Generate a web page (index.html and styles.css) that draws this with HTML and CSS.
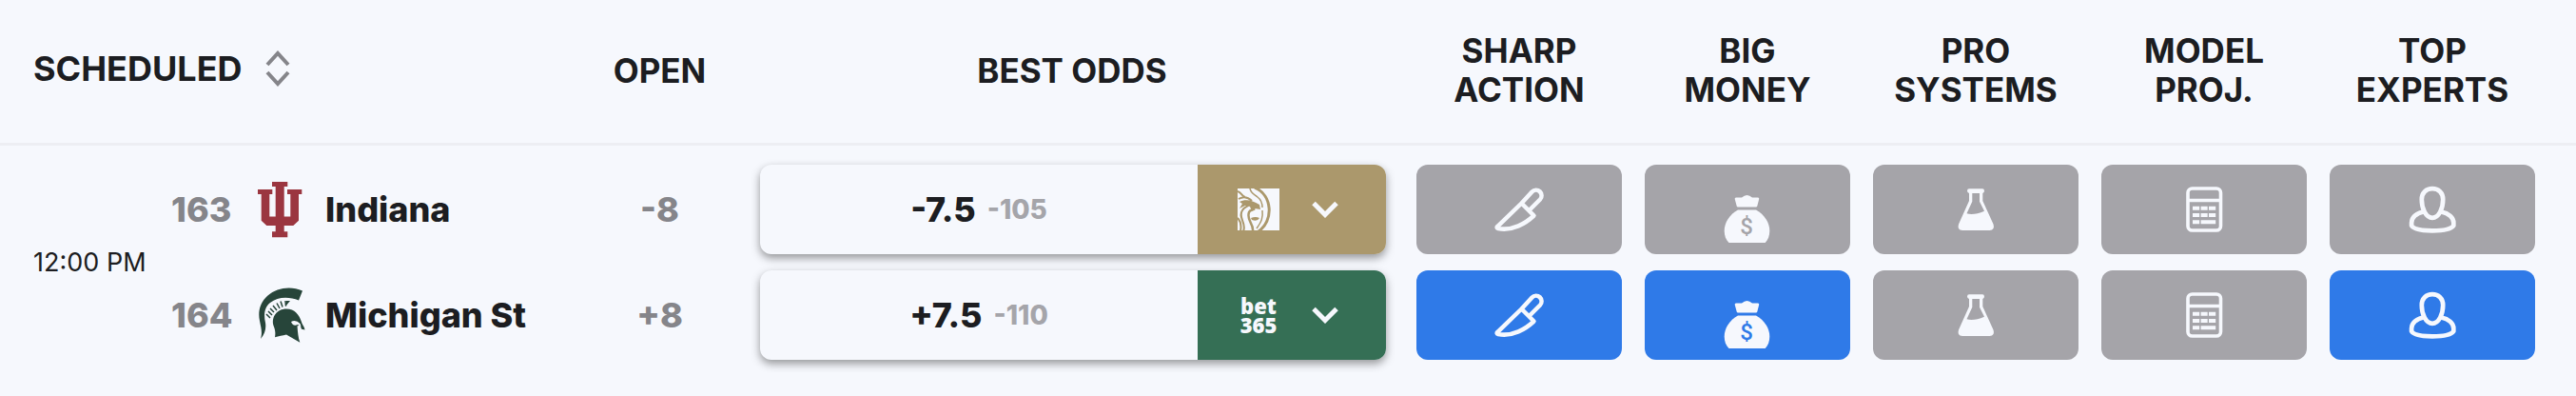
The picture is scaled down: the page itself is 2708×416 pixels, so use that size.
FILE: index.html
```html
<!DOCTYPE html>
<html lang="en">
<head>
  <meta charset="UTF-8">
  <meta name="viewport" content="width=device-width, initial-scale=1.0">
  <title>Best Odds</title>
  <link rel="stylesheet" href="styles.css">
</head>
<body>
  <!-- Shared icons -->
  <svg class="icon-defs" width="0" height="0" aria-hidden="true">
    <symbol id="icon-knife" viewBox="0 0 64 64">
      <path d="M34.5 25.5L45.5 13.5A5.6 5.6 0 0 1 54 21.5L43 32.5M34.5 25.5L47.5 38.5C39 46.5 25 55 10 52Q7.5 51.3 9.3 49.8Z" fill="none" stroke="currentColor" stroke-width="4.5" stroke-linejoin="round" stroke-linecap="round"/>
    </symbol>
    <symbol id="icon-money" viewBox="0 0 64 70">
      <path d="M20 19.5H26Q31.5 14.5 37 19.5H43Q44.5 19.5 44.2 21L42.3 28.5Q42 29.5 41 29.5H22Q21 29.5 20.7 28.5L18.7 21Q18.5 19.5 20 19.5Z" fill="currentColor"/>
      <path d="M22 32.5H41C50 37.5 55.3 46 55.3 54.5C55.3 60 53.5 64 50.7 67H12.5C9.5 64 7.7 60 7.7 54.5C7.7 46 13 37.5 22 32.5Z" fill="currentColor"/>
    </symbol>
    <symbol id="icon-flask" viewBox="0 0 64 64">
      <path fill-rule="evenodd" d="M25 10.3H39Q41 10.3 41 12.6Q41 14.5 39.3 15V23L50.5 47.5Q52.5 54 46.5 54H18Q12 54 14 47.5L25 23V15Q23 14.5 23 12.6Q23 10.3 25 10.3ZM28.3 15V23.7L22.5 36.3Q30 38.5 41 33.7L36 23.7V15Z" fill="currentColor"/>
    </symbol>
    <symbol id="icon-calc" viewBox="0 0 64 64">
      <rect x="15" y="10" width="34.5" height="44" rx="4.5" fill="none" stroke="currentColor" stroke-width="3.6"/>
      <path d="M15 22.5H49.5" stroke="currentColor" stroke-width="3.4"/>
      <path d="M20 30.7H27.2M28.6 30.7H35.7M37 30.7H44.2M20 38H27.2M28.6 38H35.7M37 38H44.2M20 45.2H27.2M28.6 45.2H44.2" stroke="currentColor" stroke-width="4"/>
    </symbol>
    <symbol id="icon-expert" viewBox="0 0 64 64">
      <path d="M32 10.2C38.5 10.2 43.2 14.5 43.2 21.5C43.2 31 39 40.8 32 40.8C25 40.8 20.8 31 20.8 21.5C20.8 14.5 25.5 10.2 32 10.2ZM22.5 34.5C15 36 10.1 40.5 10.1 46V49C12 52.5 21 54.3 32 54.3C43 54.3 52 52.5 54.3 49V46C54.3 40.5 49 36 41.5 34.5" fill="none" stroke="currentColor" stroke-width="4.7" stroke-linejoin="round"/>
    </symbol>
    <symbol id="icon-chevron" viewBox="0 0 28 18">
      <path d="M2 2.5L14 14.5L26 2.5" fill="none" stroke="currentColor" stroke-width="5"/>
    </symbol>
  </svg>

  <table class="odds-table">
    <colgroup>
      <col class="col-time">
      <col>
      <col class="col-open">
      <col class="col-odds">
      <col class="col-flag">
      <col class="col-flag">
      <col class="col-flag">
      <col class="col-flag">
      <col class="col-last">
    </colgroup>
    <thead>
      <tr>
        <th class="scheduled" colspan="2">
          <button class="sort" type="button">
            SCHEDULED
            <svg class="sort-icon" width="26" height="38" viewBox="0 0 26 38" aria-hidden="true">
              <path d="M2 15L13 3L24 15M2 23L13 35L24 23" fill="none" stroke="currentColor" stroke-width="4"/>
            </svg>
          </button>
        </th>
        <th>OPEN</th>
        <th>BEST ODDS</th>
        <th>SHARP<br>ACTION</th>
        <th>BIG<br>MONEY</th>
        <th>PRO<br>SYSTEMS</th>
        <th>MODEL<br>PROJ.</th>
        <th class="last">TOP<br>EXPERTS</th>
      </tr>
    </thead>
    <tbody>
      <!-- Away team -->
      <tr class="away">
        <td class="time" rowspan="2">12:00 PM</td>
        <td>
          <div class="team">
            <span class="rotation">163</span>
            <svg class="team-logo" width="52" height="60" viewBox="0 0 52 60" role="img" aria-label="Indiana logo">
              <path fill="#9b3640" d="M16 1H32.3V6H28.7V37.5H35.3V14H32V9H47.3V14H44V41.7L38.3 47H28.7V53.3H32.3V59.3H16V53.3H19.7V47H10.3L4.7 41.7V14H1V9H16.3V14H13.3V37.5H19.7V6H16Z"/>
            </svg>
            <span class="team-name">Indiana</span>
          </div>
        </td>
        <td class="open">-8</td>
        <td>
          <div class="best-odds">
            <div class="line"><span class="spread">-7.5</span><span class="price">-105</span></div>
            <button class="book betmgm" type="button" aria-label="BetMGM">
              <svg class="book-logo" width="44" height="44" viewBox="0 0 44 44" aria-hidden="true">
                <path fill="currentColor" d="M0 0H44V44H0Z"/>
                <g fill="none" stroke="#ab986c">
                  <path d="M18 -1C37 7 38 34 22 45" stroke-width="3"/>
                  <path d="M13 -1C13 5 18 6 21 9C25 12 26 16 26 20" stroke-width="1.5"/>
                  <path d="M0 3C5 5 4 8 8 9M1 11C6 8 11 9 15 13" stroke-width="2"/>
                  <path d="M6 45C10 36 0 31 5 23C7 19 10 20 12 17M0 31C4 35 4 40 3 45" stroke-width="2"/>
                  <path d="M16 45C17 36 9 34 12 25C13 22 16 23 18 21" stroke-width="2.5"/>
                  <path d="M26 23C27 31 25 35 20 42" stroke-width="1.5"/>
                </g>
                <path fill="#ab986c" d="M2 14C8 11 15 12 23 17L24 22L18 21L15 24L13 19L8 18L2 21L5 16ZM14 31Q19 29 23 31Q21 35 15 33Z"/>
              </svg>
              <svg class="chevron" width="28" height="18"><use href="#icon-chevron"/></svg>
            </button>
          </div>
        </td>
        <td><button class="flag" type="button" aria-label="Sharp action"><svg width="64" height="64"><use href="#icon-knife"/></svg></button></td>
        <td><button class="flag" type="button" aria-label="Big money"><svg class="bag" width="64" height="70"><use href="#icon-money"/><text class="money-sign" x="31" y="58" text-anchor="middle">$</text></svg></button></td>
        <td><button class="flag" type="button" aria-label="Pro systems"><svg width="64" height="64"><use href="#icon-flask"/></svg></button></td>
        <td><button class="flag" type="button" aria-label="Model projections"><svg width="64" height="64"><use href="#icon-calc"/></svg></button></td>
        <td class="last"><button class="flag" type="button" aria-label="Top experts"><svg width="64" height="64"><use href="#icon-expert"/></svg></button></td>
      </tr>
      <!-- Home team -->
      <tr class="home">
        <td>
          <div class="team">
            <span class="rotation">164</span>
            <svg class="team-logo" width="52" height="60" viewBox="0 0 52 60" role="img" aria-label="Michigan State logo">
              <g fill="#27453a">
                <path d="M48 4.5C36 -1 21 1 11.5 9.5C3 17 1 27 3 36C4.5 44 6 48 4 55C8.5 50 10 44 9 38C7 29 8 22 14 17C22 10.5 34 10.5 44 14.5Z"/>
                <path d="M19 53.3C20 48 19 45 17.5 41C15 32 21 23.5 31 23.5C40 23.5 44.5 30 46.5 36C47.5 40 50 42 50.5 45.5L47 44.8L45.5 40.5L42.5 41.5C43 48 43.5 54 45.3 58.7L31 50.5C27 51.5 23 52 19 53.3Z"/>
              </g>
              <path fill="#f6f8fd" d="M36 37Q41 34.5 45.5 39L46.5 42L43 40Q39 42 37 39Z"/>
              <path d="M14 33L10 29M16 30L12 26M18 27L14 23M21 25L17 20M24 23L21 17.5M27 21.5L25 15.5M30.5 20.5L30 15" fill="none" stroke="#27453a" stroke-width="1.5"/>
              <path fill="#27453a" d="M31 15L35 15L30 21Z"/>
            </svg>
            <span class="team-name">Michigan St</span>
          </div>
        </td>
        <td class="open">+8</td>
        <td>
          <div class="best-odds">
            <div class="line"><span class="spread">+7.5</span><span class="price">-110</span></div>
            <button class="book bet365" type="button">
              <span class="book-logo">bet<br>365</span>
              <svg class="chevron" width="28" height="18"><use href="#icon-chevron"/></svg>
            </button>
          </div>
        </td>
        <td><button class="flag active" type="button" aria-label="Sharp action"><svg width="64" height="64"><use href="#icon-knife"/></svg></button></td>
        <td><button class="flag active" type="button" aria-label="Big money"><svg class="bag" width="64" height="70"><use href="#icon-money"/><text class="money-sign" x="31" y="58" text-anchor="middle">$</text></svg></button></td>
        <td><button class="flag" type="button" aria-label="Pro systems"><svg width="64" height="64"><use href="#icon-flask"/></svg></button></td>
        <td><button class="flag" type="button" aria-label="Model projections"><svg width="64" height="64"><use href="#icon-calc"/></svg></button></td>
        <td class="last"><button class="flag active" type="button" aria-label="Top experts"><svg width="64" height="64"><use href="#icon-expert"/></svg></button></td>
      </tr>
    </tbody>
  </table>
</body>
</html>
```
FILE: styles.css
```css
* {
  box-sizing: border-box;
}
body {
  margin: 0;
  background-color: #f6f8fd;
  color: #1c1d21;
  font-family: Inter, "Liberation Sans", sans-serif;
}
button {
  border: 0;
  padding: 0;
  font: inherit;
  color: inherit;
  background: none;
  cursor: pointer;
}
.icon-defs {
  position: absolute;
}

/* Table */
.odds-table {
  width: 100%;
  table-layout: fixed;
  border-collapse: separate;
  border-spacing: 0;
}
.col-time {
  width: 180px;
}
.col-open {
  width: 167px;
}
.col-odds {
  width: 700px;
}
.col-flag {
  width: 240px;
}
.col-last {
  width: 271px;
}
th {
  height: 153px;
  padding: 0 12px 2px;
  border-bottom: 3px solid #edeef3;
  font-size: 35px;
  font-weight: 700;
  line-height: 41px;
  text-align: center;
}
td {
  padding: 0 12px;
}
.away td {
  padding-top: 20px;
}
.home td {
  padding-top: 17px;
  padding-bottom: 38px;
}
th.last, td.last {
  padding-right: 43px;
}
th.scheduled {
  padding: 0 0 6px 35px;
  text-align: left;
}
.sort {
  display: flex;
  align-items: center;
  gap: 24px;
  font-size: 36px;
}
.sort-icon {
  color: #85858a;
}

/* Teams */
.away .time {
  padding: 20px 0 38px 35px;
  font-size: 27px;
  white-space: nowrap;
}
td:has(.team) {
  padding-left: 0;
}
.team {
  display: flex;
  align-items: center;
  height: 94px;
  font-size: 36px;
  font-weight: 800;
}
.rotation {
  width: 68px;
  color: #85858a;
}
.team-logo {
  margin: 0 20px 0 22px;
}
.open {
  font-size: 36px;
  font-weight: 800;
  text-align: center;
  color: #85858a;
}

/* Best odds */
td:has(.best-odds) {
  padding-left: 22px;
  padding-right: 20px;
}
.best-odds {
  display: flex;
  height: 94px;
  border-radius: 12px;
  box-shadow: 0 4px 10px rgba(0, 0, 0, 0.4);
  background-color: #f6f8fd;
}
.line {
  flex: 1;
  display: flex;
  align-items: center;
  justify-content: center;
  gap: 12px;
}
.spread {
  font-size: 36px;
  font-weight: 800;
}
.price {
  font-size: 28px;
  font-weight: 800;
  color: #a5a5aa;
}
.book {
  display: flex;
  align-items: center;
  gap: 34px;
  width: 198px;
  padding-left: 42px;
  border-radius: 0 12px 12px 0;
  color: #f6f8fd;
}
.book-logo {
  width: 44px;
}
.betmgm {
  background-color: #ab986c;
}
.bet365 {
  background-color: #356f55;
}
.bet365 .book-logo {
  font-family: "Open Sans", sans-serif;
  font-size: 22px;
  font-weight: 800;
  line-height: 20px;
  text-align: center;
}

/* Flags */
.flag {
  --flag-color: #a5a4a9;
  display: flex;
  align-items: center;
  justify-content: center;
  width: 100%;
  height: 94px;
  border-radius: 12px;
  background-color: var(--flag-color);
  color: #f6f8fd;
}
.flag.active {
  --flag-color: #2f7ae8;
}
.bag {
  margin-top: 6px;
}
.money-sign {
  fill: var(--flag-color);
  font-family: Roboto, sans-serif;
  font-size: 24px;
  font-weight: 500;
}
```
